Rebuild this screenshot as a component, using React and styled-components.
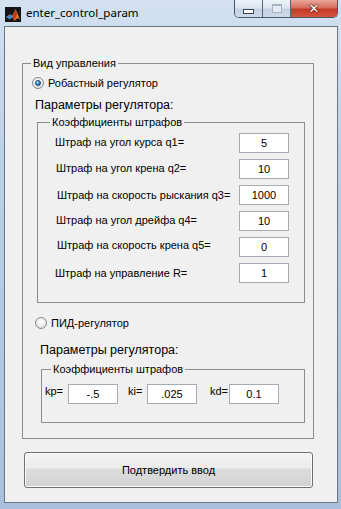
import React from 'react';
import styled, { createGlobalStyle } from 'styled-components';

const GlobalStyle = createGlobalStyle`
  html, body {
    margin: 0;
    padding: 0;
  }
  body {
    font-family: "Liberation Sans", Arial, sans-serif;
    background: #b7cbe2;
  }
`;

const Window = styled.div`
  width: 341px;
  height: 509px;
  display: flex;
  flex-direction: column;
  background: linear-gradient(180deg, #d3e1f1 0%, #bcd0e8 30%, #a9c0dc 100%);
  overflow: hidden;
`;

const TitleBar = styled.div`
  height: 26px;
  display: flex;
  align-items: flex-start;
  flex-shrink: 0;
`;

const AppIcon = styled.svg`
  margin: 7px 0 0 5px;
  flex-shrink: 0;
`;

const Caption = styled.span`
  margin-left: 5px;
  line-height: 26px;
  font-family: "Noto Sans", "Open Sans", sans-serif;
  font-size: 11.5px;
  color: #000;
`;

const Controls = styled.div`
  margin-left: auto;
  margin-right: 3px;
  height: 17px;
  display: flex;
  border: 1px solid #4a5565;
  border-top: none;
  border-radius: 0 0 5px 5px;
  overflow: hidden;
`;

const CtrlButton = styled.div`
  width: ${p => p.$w}px;
  height: 17px;
  display: flex;
  align-items: center;
  justify-content: center;
  border-left: ${p => (p.$first ? 'none' : '1px solid #5a6677')};
  background: ${p =>
    p.$close
      ? 'linear-gradient(180deg, #e9a89c 0%, #d66c5c 45%, #c53a28 55%, #d2553f 100%)'
      : 'linear-gradient(180deg, #eef3f9 0%, #dbe5f0 45%, #c4d3e4 55%, #ccdaea 100%)'};
`;

const MinGlyph = styled.span`
  width: 9px;
  height: 3px;
  background: #fff;
  border: 1px solid #3a4350;
  margin-top: 5px;
`;

const MaxGlyph = styled.span`
  width: 8px;
  height: 6px;
  border: 1px solid #a7b3c2;
  border-top-width: 2px;
  background: #e4ebf3;
`;

const CloseGlyph = styled.span`
  font-family: "DejaVu Sans", sans-serif;
  font-weight: bold;
  font-size: 13px;
  line-height: 13px;
  color: #fff;
  text-shadow: 0 0 1px #4a1a12, 0 0 1px #4a1a12, 0 0 2px #4a1a12;
`;

const Client = styled.div`
  flex: 1;
  margin: 0 3px 6px 4px;
  border: 1px solid #6b7785;
  background: #f0f0f0;
  padding: 36px 0 0 17px;
  display: flex;
  flex-direction: column;
  align-items: flex-start;
`;

const Group = styled.div`
  position: relative;
  box-sizing: border-box;
  width: ${p => p.$w}px;
  height: ${p => p.$h}px;
  margin: ${p => p.$top || 0}px 0 0 ${p => p.$left || 0}px;
  border: 1px solid #8d8d8d;
  display: flex;
  flex-direction: column;
  align-items: flex-start;
  flex-shrink: 0;
`;

const Legend = styled.span`
  position: absolute;
  top: -8px;
  left: ${p => p.$left}px;
  padding: 0 2px;
  background: #f0f0f0;
  font-size: 11px;
  line-height: 14px;
  color: #000;
  white-space: nowrap;
`;

const RadioRow = styled.label`
  display: flex;
  align-items: center;
  gap: 4px;
  height: 14px;
  margin: ${p => p.$top}px 0 0 ${p => p.$left}px;
  font-size: 11px;
  color: #000;
`;

const Radio = styled.span`
  position: relative;
  box-sizing: border-box;
  width: 12px;
  height: 12px;
  border-radius: 50%;
  border: 1px solid #8b8b8b;
  background: radial-gradient(circle at 50% 40%, #ffffff 0%, #ececec 50%, #cfcfcf 100%);
  flex-shrink: 0;

  &::after {
    content: '';
    display: ${p => (p.$checked ? 'block' : 'none')};
    position: absolute;
    left: 2px;
    top: 2px;
    width: 6px;
    height: 6px;
    box-sizing: border-box;
    border-radius: 50%;
    border: 1px solid #163f66;
    background: radial-gradient(circle at 35% 30%, #b9f1ff 0%, #3d9ce0 45%, #0f4f8f 100%);
  }
`;

const ParamsTitle = styled.div`
  margin: ${p => p.$top}px 0 0 ${p => p.$left}px;
  font-size: 12.5px;
  line-height: 16px;
  color: #000;
`;

const Rows = styled.div`
  display: flex;
  flex-direction: column;
  gap: 6px;
  padding-top: 10px;
`;

const Row = styled.div`
  display: grid;
  grid-template-columns: 201px 50px;
  align-items: center;
  height: 20px;
`;

const RowLabel = styled.span`
  padding-left: ${p => p.$indent}px;
  padding-bottom: ${p => p.$lift}px;
  font-size: 11px;
  line-height: 14px;
  color: #000;
  white-space: nowrap;
`;

const Field = styled.div`
  box-sizing: border-box;
  width: 50px;
  height: 20px;
  border: 1px solid #a6aab2;
  background: #fff;
  font-size: 11px;
  line-height: 18px;
  text-align: center;
  color: #000;
`;

const GainRow = styled.div`
  display: flex;
  align-items: flex-start;
  padding: 14px 0 0 3px;
`;

const GainLabel = styled.span`
  width: ${p => p.$w}px;
  margin-left: ${p => p.$gap}px;
  font-size: 11px;
  line-height: 14px;
  color: #000;
`;

const ConfirmButton = styled.button`
  box-sizing: border-box;
  width: 289px;
  height: 36px;
  margin: 13px 0 0 2px;
  border: 1px solid #707070;
  border-radius: 3px;
  box-shadow: inset 0 0 0 1px #fbfbfb;
  background: linear-gradient(180deg, #f3f3f3 0%, #ececec 45%, #dddddd 46%, #d2d2d2 100%);
  font-family: "Liberation Sans", Arial, sans-serif;
  font-size: 11px;
  color: #000;
  padding: 0;
`;

const penalties = [
  { label: 'Штраф на угол курса q1=', value: '5', indent: 17, lift: 2 },
  { label: 'Штраф на угол крена q2=', value: '10', indent: 18, lift: 2 },
  { label: 'Штраф на скорость рыскания q3=', value: '1000', indent: 19, lift: 1 },
  { label: 'Штраф на угол дрейфа q4=', value: '10', indent: 18, lift: 2 },
  { label: 'Штраф на скорость крена q5=', value: '0', indent: 19, lift: 4 },
  { label: 'Штраф на управление R=', value: '1', indent: 17, lift: 0 },
];

const gains = [
  { label: 'kp=', value: '-.5', w: 23, gap: 0 },
  { label: 'ki=', value: '.025', w: 19, gap: 10 },
  { label: 'kd=', value: '0.1', w: 19, gap: 13 },
];

const MatlabIcon = () => (
  <AppIcon width="16" height="15" viewBox="0 0 16 15">
    <rect width="16" height="15" fill="#151515" />
    <path d="M1 10 L5 7.5 L7.5 8.5 L10.5 2 L15 12.5 L12.5 11 L9.5 14 L7.5 10.5 Z" fill="#e7782c" />
    <path d="M10.5 2 L12 7 L9.5 14 L7.5 10.5 Z" fill="#c4391b" />
    <path d="M1 10 L5 7.5 L7.5 8.5 L7.5 10.5 L4.5 12.5 Z" fill="#3d86c9" />
  </AppIcon>
);

export default function App() {
  return (
    <>
      <GlobalStyle />
      <Window>
        <TitleBar>
          <MatlabIcon />
          <Caption>enter_control_param</Caption>
          <Controls>
            <CtrlButton $w={27} $first>
              <MinGlyph />
            </CtrlButton>
            <CtrlButton $w={27}>
              <MaxGlyph />
            </CtrlButton>
            <CtrlButton $w={46} $close>
              <CloseGlyph>✕</CloseGlyph>
            </CtrlButton>
          </Controls>
        </TitleBar>

        <Client>
          <Group $w={292} $h={376}>
            <Legend $left={8}>Вид управления</Legend>

            <RadioRow $top={12} $left={9}>
              <Radio $checked />
              Робастный регулятор
            </RadioRow>
            <ParamsTitle $top={7} $left={12}>Параметры регулятора:</ParamsTitle>

            <Group $w={268} $h={181} $top={9} $left={14}>
              <Legend $left={12}>Коэффициенты штрафов</Legend>
              <Rows>
                {penalties.map(p => (
                  <Row key={p.label}>
                    <RowLabel $indent={p.indent} $lift={p.lift}>{p.label}</RowLabel>
                    <Field>{p.value}</Field>
                  </Row>
                ))}
              </Rows>
            </Group>

            <RadioRow $top={13} $left={12}>
              <Radio />
              ПИД-регулятор
            </RadioRow>
            <ParamsTitle $top={12} $left={17}>Параметры регулятора:</ParamsTitle>

            <Group $w={264} $h={54} $top={11} $left={18}>
              <Legend $left={9}>Коэффициенты штрафов</Legend>
              <GainRow>
                {gains.map(g => (
                  <React.Fragment key={g.label}>
                    <GainLabel $w={g.w} $gap={g.gap}>{g.label}</GainLabel>
                    <Field>{g.value}</Field>
                  </React.Fragment>
                ))}
              </GainRow>
            </Group>
          </Group>

          <ConfirmButton>Подтвердить ввод</ConfirmButton>
        </Client>
      </Window>
    </>
  );
}
